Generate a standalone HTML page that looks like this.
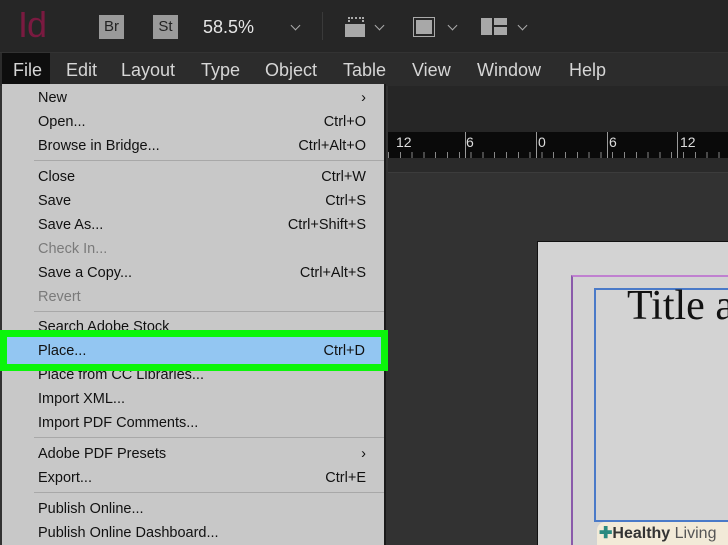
<!DOCTYPE html>
<html><head><meta charset="utf-8"><style>
*{margin:0;padding:0;box-sizing:border-box}
body{width:728px;height:545px;overflow:hidden;background:#323232;font-family:"Liberation Sans",sans-serif;position:relative}
.abs{position:absolute}
.tb{left:0;top:0;width:728px;height:52px;background:#262626}
.mb{left:0;top:52px;width:728px;height:34px;background:#2c2c2c;border-top:1px solid #333}
.mb span{position:absolute;top:7px;color:#d6d6d6;font-size:18px}
.menu{left:2px;top:84px;width:384px;height:461px;background:#c8c8c8;border-right:2px solid #1a1a1a}
.it{position:absolute;left:36px;font-size:14.5px;color:#111;width:328px}
.it b{font-weight:normal;position:absolute;right:0}
.dis{color:#7a7a7a}
.sep{position:absolute;left:32px;width:350px;height:1px;background:#a8a8a8}
.chev{position:absolute;width:7px;height:7px;border-right:1.5px solid #aaa;border-bottom:1.5px solid #aaa;transform:rotate(45deg)}
</style></head><body>
<div class="abs tb"></div>
<div class="abs" style="left:18px;top:4px;font-size:36px;color:#7a1a40;letter-spacing:-1px">Id</div>
<div class="abs" style="left:99px;top:15px;width:25px;height:24px;background:#9a9a9a;color:#222;font-size:15px;text-align:center;line-height:24px">Br</div>
<div class="abs" style="left:153px;top:15px;width:25px;height:24px;background:#9a9a9a;color:#222;font-size:15px;text-align:center;line-height:24px">St</div>
<div class="abs" style="left:203px;top:17px;color:#e6e6e6;font-size:18px">58.5%</div>
<div class="chev" style="left:292px;top:22px"></div>
<div class="abs" style="left:322px;top:12px;width:1px;height:28px;background:#3a3a3a"></div>
<div class="abs" style="left:345px;top:24px;width:20px;height:13px;background:#a8a8a8"></div>
<div class="abs" style="left:348px;top:17px;width:16px;height:3px;border-left:2px dotted #aaa;border-right:2px dotted #aaa;border-top:2px dotted #aaa"></div>
<div class="chev" style="left:376px;top:22px"></div>
<div class="abs" style="left:413px;top:17px;width:22px;height:20px;border:1.5px solid #aaa"></div>
<div class="abs" style="left:416px;top:20px;width:16px;height:14px;background:#a8a8a8"></div>
<div class="chev" style="left:449px;top:22px"></div>
<div class="abs" style="left:481px;top:18px;width:11px;height:17px;background:#a8a8a8"></div>
<div class="abs" style="left:494px;top:18px;width:13px;height:7px;background:#a8a8a8"></div>
<div class="abs" style="left:494px;top:27px;width:13px;height:8px;background:#a8a8a8"></div>
<div class="chev" style="left:519px;top:22px"></div>
<div class="abs mb">
<div class="abs" style="left:2px;top:0;width:48px;height:34px;background:#0e0e0e"></div>
<span style="left:13px">File</span><span style="left:66px">Edit</span><span style="left:121px">Layout</span><span style="left:201px">Type</span><span style="left:265px">Object</span><span style="left:343px">Table</span><span style="left:412px">View</span><span style="left:477px">Window</span><span style="left:569px">Help</span>
</div>
<div class="abs" style="left:388px;top:86px;width:340px;height:46px;background:#262626"></div>
<div class="abs" style="left:388px;top:132px;width:340px;height:26px;background:#0a0a0a;color:#ddd;font-size:14px">
<span class="abs" style="left:8px;top:2px">12</span><span class="abs" style="left:78px;top:2px">6</span><span class="abs" style="left:150px;top:2px">0</span><span class="abs" style="left:221px;top:2px">6</span><span class="abs" style="left:292px;top:2px">12</span>
<div class="abs" style="left:0;top:20px;width:340px;height:6px;background:repeating-linear-gradient(90deg,#888 0 1px,transparent 1px 11.8px)"></div>
<div class="abs" style="left:77px;top:0;width:1px;height:26px;background:#999"></div>
<div class="abs" style="left:148px;top:0;width:1px;height:26px;background:#999"></div>
<div class="abs" style="left:219px;top:0;width:1px;height:26px;background:#999"></div>
<div class="abs" style="left:289px;top:0;width:1px;height:26px;background:#999"></div>
</div>
<div class="abs" style="left:388px;top:158px;width:340px;height:15px;background:#2a2a2a;border-bottom:1px solid #3c3c3c"></div>
<div class="abs" style="left:537px;top:241px;width:191px;height:304px;background:#d3d3d3;border-left:1px solid #111;border-top:1px solid #111"></div>
<div class="abs" style="left:571px;top:275px;width:157px;height:270px;border-left:2px solid #8a5aaa;border-top:2px solid #c080d0"></div>
<div class="abs" style="left:594px;top:288px;width:134px;height:234px;border:2px solid #4a7ac8;border-right:none"></div>
<div class="abs" style="left:627px;top:282px;font-family:'Liberation Serif',serif;font-size:42px;color:#111;white-space:nowrap">Title a</div>
<div class="abs" style="left:597px;top:522px;width:131px;height:23px;background:#f2ead8;border-radius:8px 0 0 0"></div>
<div class="abs" style="left:599px;top:523px;font-size:16px;color:#333;font-weight:bold;white-space:nowrap"><span style="color:#2a8a80">✚</span>Healthy <span style="font-weight:normal;color:#555">Living</span></div>

<div class="abs menu">
<div class="it" style="top:6px">New<b>›</b></div>
<div class="it" style="top:30px">Open...<b>Ctrl+O</b></div>
<div class="it" style="top:54px">Browse in Bridge...<b>Ctrl+Alt+O</b></div>
<div class="sep" style="top:76px"></div>
<div class="it" style="top:85px">Close<b>Ctrl+W</b></div>
<div class="it" style="top:109px">Save<b>Ctrl+S</b></div>
<div class="it" style="top:133px">Save As...<b>Ctrl+Shift+S</b></div>
<div class="it dis" style="top:157px">Check In...</div>
<div class="it" style="top:181px">Save a Copy...<b>Ctrl+Alt+S</b></div>
<div class="it dis" style="top:205px">Revert</div>
<div class="sep" style="top:227px"></div>
<div class="it" style="top:235px">Search Adobe Stock</div>
<div class="it" style="top:283px">Place from CC Libraries...</div>
<div class="it" style="top:307px">Import XML...</div>
<div class="it" style="top:331px">Import PDF Comments...</div>
<div class="sep" style="top:353px"></div>
<div class="it" style="top:362px">Adobe PDF Presets<b>›</b></div>
<div class="it" style="top:386px">Export...<b>Ctrl+E</b></div>
<div class="sep" style="top:408px"></div>
<div class="it" style="top:417px">Publish Online...</div>
<div class="it" style="top:441px">Publish Online Dashboard...</div>
</div>
<div class="abs" style="left:0;top:330px;width:388px;height:41px;border:7px solid #0bf50b;background:#93c6f2"></div>
<div class="abs" style="left:38px;top:343px;width:327px;font-size:14.5px;color:#111">Place...<span style="position:absolute;right:0">Ctrl+D</span></div>
</body></html>
